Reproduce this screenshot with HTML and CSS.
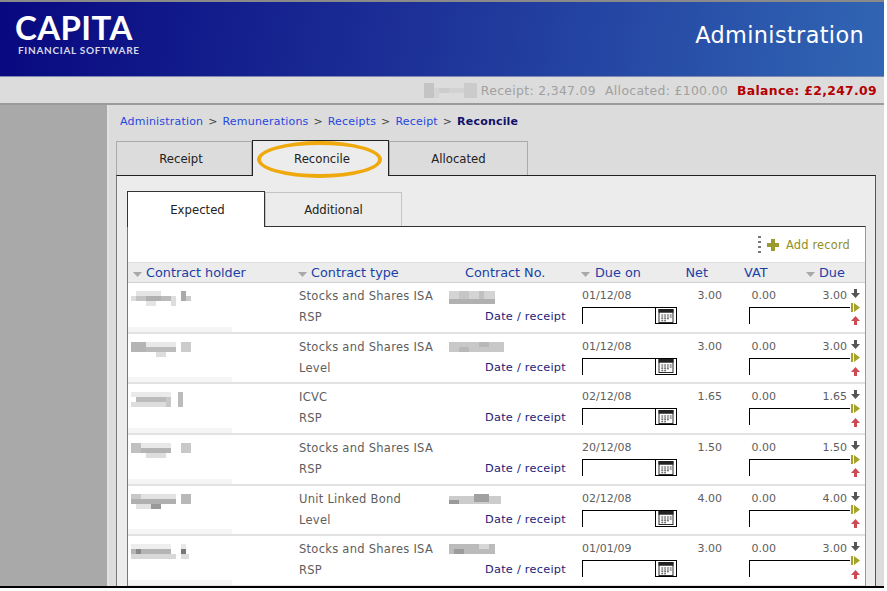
FILE: index.html
```html
<!DOCTYPE html>
<html lang="en">
<head>
<meta charset="utf-8">
<title>Administration</title>
<link rel="stylesheet" href="styles.css">
</head>
<body>
<svg class="defs" width="0" height="0">
  <symbol id="i-sort" viewBox="0 0 9 5"><path d="M0 0h9L4.500 5z" fill="#a8a8a8"/></symbol>
  <symbol id="i-cal" viewBox="0 0 16 15"><rect x="0.500" y="0.500" width="15" height="14" fill="#fff" stroke="#222"/><rect x="0" y="0" width="16" height="4" fill="#222"/><path d="M3 6h2v1H3zm3 0h2v1H6zm3 0h2v1H9zm3 0h2v1h-2zM3 8h2v1H3zm3 0h2v1H6zm3 0h2v1H9zm3 0h2v1h-2zM3 10h2v1H3zm3 0h2v1H6zm3 0h2v1H9zM3 12h2v1H3zm3 0h2v1H6z" fill="#444"/></symbol>
  <symbol id="i-down" viewBox="0 0 9 9"><path d="M3 0h3v4h3L4.500 9 0 4h3z" fill="#555"/></symbol>
  <symbol id="i-right" viewBox="0 0 9 9"><path d="M0 0h2v9H0zM3 0l6 4.500L3 9z" fill="#a5a32a"/></symbol>
  <symbol id="i-up" viewBox="0 0 9 9"><path d="M4.500 0 9 5H6v4H3V5H0z" fill="#cc4a52"/></symbol>
  <symbol id="i-plus" viewBox="0 0 12 12"><path d="M4 0h4v4h4v4H8v4H4V8H0V4h4z" fill="#9a9a30"/></symbol>
</svg>
<div class="frame">
  <header class="banner">
    <div class="logo">
      <div class="logo-main">CAPITA</div>
      <div class="logo-sub">FINANCIAL SOFTWARE</div>
    </div>
    <div class="area-title">Administration</div>
  </header>
  <div class="status">
    <svg class="mosaic" width="53" height="15"><g fill="#c4c4c4"><rect width="10" height="15" x="0"/><rect width="5" height="10" x="10" y="5" fill="#d4d4d4"/><rect width="10" height="5" x="15" y="5" fill="#ccc"/><rect width="15" height="5" x="25" y="5" fill="#d2d2d2"/><rect width="13" height="15" x="40" fill="#cbcbcb"/></g></svg>
    <span>Receipt: 2,347.09</span>
    <span>Allocated: £100.00</span>
    <strong class="balance">Balance: £2,247.09</strong>
  </div>
  <div class="body">
    <aside class="side"></aside>
    <main class="main">
      <nav class="crumbs"><a>Administration</a> &gt; <a>Remunerations</a> &gt; <a>Receipts</a> &gt; <a>Receipt</a> &gt; <b>Reconcile</b></nav>
      <div class="tabs">
        <div class="tab">Receipt</div>
        <div class="tab tab-on">Reconcile</div>
        <div class="tab">Allocated</div>
        <div class="ring"></div>
      </div>
      <section class="panel">
        <div class="subtabs">
          <div class="subtab subtab-on">Expected</div>
          <div class="subtab">Additional</div>
        </div>
        <div class="sheet">
          <div class="toolbar">
            <span class="dots"></span>
            <svg class="plus"><use href="#i-plus"/></svg>
            <span class="add">Add record</span>
          </div>
          <div class="grid head">
            <div class="hc"><svg class="sort"><use href="#i-sort"/></svg>Contract holder</div>
            <div class="hc hc-type"><svg class="sort"><use href="#i-sort"/></svg>Contract type</div>
            <div class="hc hc-no">Contract No.</div>
            <div class="hc hc-due"><svg class="sort"><use href="#i-sort"/></svg>Due on</div>
            <div class="hc hc-net">Net</div>
            <div class="hc hc-vat">VAT</div>
            <div class="hc hc-tot"><svg class="sort"><use href="#i-sort"/></svg>Due</div>
          </div>

          <div class="grid row">
            <svg class="mosaic name" width="60" height="15"><rect x="0" y="5" width="5" height="5" fill="#ddd"/><rect x="5" width="25" height="5" fill="#e4e4e4"/><rect x="5" y="5" width="10" height="5" fill="#c4c4c4"/><rect x="15" y="5" width="15" height="5" fill="#b0b0b0"/><rect x="30" y="5" width="10" height="5" fill="#bbb"/><rect x="15" y="10" width="10" height="5" fill="#e4e4e4"/><rect x="40" y="5" width="5" height="10" fill="#ddd"/><rect x="50" y="0" width="5" height="10" fill="#aaa"/><rect x="55" y="5" width="5" height="5" fill="#ccc"/></svg>
            <div class="type">Stocks and Shares ISA</div>
            <div class="num"><svg class="mosaic" width="46" height="13"><rect width="46" height="9" fill="#d4d4d4"/><rect y="8" width="46" height="5" fill="#b0b0b0"/><rect x="10" y="0" width="10" height="8" fill="#c6c6c6"/><rect x="30" y="0" width="5" height="8" fill="#c0c0c0"/></svg></div>
            <div class="date">01/12/08</div><div class="amt">3.00</div><div class="amt vat">0.00</div><div class="amt tot">3.00</div>
            <div class="acts"><svg><use href="#i-down"/></svg><svg><use href="#i-right"/></svg><svg><use href="#i-up"/></svg></div>
            <div class="sub">RSP</div>
            <a class="link">Date / receipt</a>
            <div class="datebox"><span class="field"></span><span class="calbtn"><svg><use href="#i-cal"/></svg></span></div>
            <div class="duebox"></div>
          </div>

          <div class="grid row">
            <svg class="mosaic name" width="60" height="15"><rect width="15" height="10" fill="#b4b4b4"/><rect x="15" y="5" width="30" height="5" fill="#bbb"/><rect x="15" width="30" height="5" fill="#e8e8e8"/><rect x="25" y="10" width="10" height="5" fill="#ddd"/><rect x="50" width="10" height="10" fill="#ccc"/></svg>
            <div class="type">Stocks and Shares ISA</div>
            <div class="num"><svg class="mosaic" width="55" height="10"><rect width="55" height="10" fill="#c8c8c8"/><rect x="10" y="5" width="10" height="5" fill="#b8b8b8"/><rect x="30" y="0" width="10" height="5" fill="#b8b8b8"/></svg></div>
            <div class="date">01/12/08</div><div class="amt">3.00</div><div class="amt vat">0.00</div><div class="amt tot">3.00</div>
            <div class="acts"><svg><use href="#i-down"/></svg><svg><use href="#i-right"/></svg><svg><use href="#i-up"/></svg></div>
            <div class="sub">Level</div>
            <a class="link">Date / receipt</a>
            <div class="datebox"><span class="field"></span><span class="calbtn"><svg><use href="#i-cal"/></svg></span></div>
            <div class="duebox"></div>
          </div>

          <div class="grid row">
            <svg class="mosaic name" width="58" height="15"><rect y="0" width="40" height="5" fill="#eaeaea"/><rect x="5" y="5" width="35" height="5" fill="#bbb"/><rect x="0" y="10" width="35" height="5" fill="#ddd"/><rect x="35" y="5" width="5" height="10" fill="#c8c8c8"/><rect x="47" y="0" width="5" height="15" fill="#bbb"/></svg>
            <div class="type">ICVC</div>
            <div class="num"></div>
            <div class="date">02/12/08</div><div class="amt">1.65</div><div class="amt vat">0.00</div><div class="amt tot">1.65</div>
            <div class="acts"><svg><use href="#i-down"/></svg><svg><use href="#i-right"/></svg><svg><use href="#i-up"/></svg></div>
            <div class="sub">RSP</div>
            <a class="link">Date / receipt</a>
            <div class="datebox"><span class="field"></span><span class="calbtn"><svg><use href="#i-cal"/></svg></span></div>
            <div class="duebox"></div>
          </div>

          <div class="grid row">
            <svg class="mosaic name" width="60" height="15"><rect width="40" height="5" fill="#e8e8e8"/><rect width="10" height="10" fill="#c0c0c0"/><rect x="10" y="5" width="30" height="5" fill="#b4b4b4"/><rect x="15" y="10" width="20" height="5" fill="#ddd"/><rect x="50" width="10" height="10" fill="#c8c8c8"/></svg>
            <div class="type">Stocks and Shares ISA</div>
            <div class="num"></div>
            <div class="date">20/12/08</div><div class="amt">1.50</div><div class="amt vat">0.00</div><div class="amt tot">1.50</div>
            <div class="acts"><svg><use href="#i-down"/></svg><svg><use href="#i-right"/></svg><svg><use href="#i-up"/></svg></div>
            <div class="sub">RSP</div>
            <a class="link">Date / receipt</a>
            <div class="datebox"><span class="field"></span><span class="calbtn"><svg><use href="#i-cal"/></svg></span></div>
            <div class="duebox"></div>
          </div>

          <div class="grid row">
            <svg class="mosaic name" width="60" height="15"><rect width="45" height="5" fill="#e2e2e2"/><rect width="10" height="10" fill="#c8c8c8"/><rect y="5" width="45" height="5" fill="#b0b0b0"/><rect x="20" y="10" width="10" height="5" fill="#999"/><rect x="5" y="10" width="15" height="5" fill="#e2e2e2"/><rect x="50" y="0" width="10" height="10" fill="#b8b8b8"/></svg>
            <div class="type">Unit Linked Bond</div>
            <div class="num"><svg class="mosaic" width="52" height="12"><rect y="2" width="52" height="8" fill="#ccc"/><rect x="0" y="6" width="10" height="4" fill="#999"/><rect x="25" y="0" width="15" height="8" fill="#a0a0a0"/></svg></div>
            <div class="date">02/12/08</div><div class="amt">4.00</div><div class="amt vat">0.00</div><div class="amt tot">4.00</div>
            <div class="acts"><svg><use href="#i-down"/></svg><svg><use href="#i-right"/></svg><svg><use href="#i-up"/></svg></div>
            <div class="sub">Level</div>
            <a class="link">Date / receipt</a>
            <div class="datebox"><span class="field"></span><span class="calbtn"><svg><use href="#i-cal"/></svg></span></div>
            <div class="duebox"></div>
          </div>

          <div class="grid row">
            <svg class="mosaic name" width="58" height="15"><rect y="0" width="40" height="5" fill="#eee"/><rect x="0" y="5" width="40" height="5" fill="#b4b4b4"/><rect x="5" y="5" width="5" height="5" fill="#888"/><rect y="10" width="45" height="5" fill="#d8d8d8"/><rect x="50" y="5" width="5" height="5" fill="#777"/><rect x="50" y="0" width="5" height="5" fill="#e8e8e8"/><rect x="50" y="10" width="8" height="5" fill="#ddd"/></svg>
            <div class="type">Stocks and Shares ISA</div>
            <div class="num"><svg class="mosaic" width="46" height="10"><rect width="46" height="10" fill="#bbb"/><rect x="5" y="5" width="10" height="5" fill="#9c9c9c"/><rect x="30" y="0" width="10" height="5" fill="#d8d8d8"/></svg></div>
            <div class="date">01/01/09</div><div class="amt">3.00</div><div class="amt vat">0.00</div><div class="amt tot">3.00</div>
            <div class="acts"><svg><use href="#i-down"/></svg><svg><use href="#i-right"/></svg><svg><use href="#i-up"/></svg></div>
            <div class="sub">RSP</div>
            <a class="link">Date / receipt</a>
            <div class="datebox"><span class="field"></span><span class="calbtn"><svg><use href="#i-cal"/></svg></span></div>
            <div class="duebox"></div>
          </div>
        </div>
      </section>
    </main>
  </div>
</div>
</body>
</html>
```

FILE: styles.css
```css
* { box-sizing: border-box; }
html, body { margin: 0; padding: 0; background: #fff; }
body { height: 591px; overflow: hidden; font-family: "DejaVu Sans", Verdana, sans-serif; font-size: 11px; color: #5e5e5e; }
.defs { position: absolute; }
svg { display: block; }

.frame { width: 884px; height: 588px; overflow: hidden; display: flex; flex-direction: column; border-top: 2px solid #8a8a8a; border-bottom: 2px solid #000; background: #dcdcdc; }

.banner { height: 75px; flex: none; display: flex; justify-content: space-between; background: linear-gradient(100deg, #08087f 0%, #1c2f97 45%, #3166b4 100%); border-bottom: 1px solid #7c87b4; }
.logo { padding: 9px 0 0 15px; color: #fff; font-family: "Lato", "Liberation Sans", sans-serif; }
.logo-main { font-size: 33px; line-height: 33px; font-weight: 700; letter-spacing: 0.4px; }
.logo-sub { margin: 0 0 0 3px; font-size: 10px; line-height: 12px; font-weight: 700; color: #d6daea; letter-spacing: 0.7px; }
.area-title { padding: 20px 20px 0 0; font-size: 22.400px; line-height: 26px; color: #fff; letter-spacing: 0.35px; }

.status { height: 28px; flex: none; display: flex; justify-content: flex-end; align-items: center; gap: 9px; padding-right: 7px; color: #a0a0a0; font-size: 12.400px; letter-spacing: 0.33px; border-bottom: 2px solid #9a9a9a; }
.status .mosaic { margin-right: -5px; }
.balance { color: #b30000; }

.body { flex: 1; min-height: 0; display: flex; }
.side { flex: none; background: #a9a9a9; border-right: 2px solid #e2e2e2; width: 109px; }
.main { flex: 1; min-width: 0; padding: 0 8px 0 7px; display: flex; flex-direction: column; }

.crumbs { height: 35px; flex: none; padding: 9px 0 0 4px; line-height: 15px; font-size: 11px; color: #444; letter-spacing: 0.2px; word-spacing: 1.200px; }
.crumbs a { color: #1f47e0; }
.crumbs b { color: #10106a; }

.tabs { position: relative; height: 35px; flex: none; display: flex; align-items: flex-end; font-size: 11.700px; }
.tab { width: 137px; height: 34px; display: flex; align-items: center; justify-content: center; color: #222; background: #dcdcdc; border: 1px solid #aaa; border-bottom: 0; }
.tab:first-child { width: 136px; padding-right: 6px; }
.tab:nth-child(3) { width: 139px; }
.tab-on { height: 36px; margin-bottom: -1px; position: relative; z-index: 1; background: #ececec; border-color: #222; padding-left: 3px; }
.ring { position: absolute; z-index: 2; left: 141px; top: 1px; width: 125px; height: 37px; border: 4px solid #f0a90c; border-radius: 50%; }

.panel { flex: 1; min-height: 0; background: #ececec; border: 1px solid #222; border-left-color: #777; border-right-color: #555; border-bottom: 0; padding: 15px 9px 0 10px; display: flex; flex-direction: column; }

.subtabs { height: 35px; flex: none; display: flex; align-items: flex-end; font-size: 11.700px; }
.subtab { width: 137px; height: 34px; padding-top: 1px; display: flex; align-items: center; justify-content: center; color: #222; border: 1px solid #c4c4c4; border-bottom: 0; }
.subtab-on { width: 138px; height: 36px; margin-bottom: -1px; padding-left: 3px; position: relative; z-index: 1; background: #fff; border-color: #333; }

.sheet { flex: 1; min-height: 0; overflow: hidden; background: #fff; border-top: 1px solid #333; border-left: 1px solid #777; border-right: 1px solid #999; }
.toolbar { height: 35px; display: flex; align-items: center; justify-content: flex-end; padding: 0 15px 0 0; }
.dots { width: 3px; height: 18px; margin-right: 6px; background: repeating-linear-gradient(to bottom, #777 0 2px, transparent 2px 5px); }
.plus { width: 12px; height: 12px; margin-right: 7px; }
.add { color: #8f8f1e; font-size: 11.400px; letter-spacing: 0.2px; }

.grid { display: grid; grid-template-columns: 171px 150px 133px 104px 36px 27px 27px 74px 16px; }
.head { height: 21px; align-items: center; background: #ececec; border-top: 1px solid #e0e0e0; border-bottom: 1px solid #d2d2d2; color: #1a3fa6; font-size: 12.800px; }
.hc { display: flex; align-items: center; white-space: nowrap; }
.sort { width: 9px; height: 5px; margin: 3px 4px 0 5px; flex: none; }
.hc-type .sort { margin-left: -1px; margin-right: 4px; }
.hc-no { padding-left: 16px; }
.hc-due .sort { margin-left: -1px; margin-right: 5px; }
.hc-net { grid-column: 5; justify-content: flex-end; padding-right: 14px; margin-left: -30px; }
.hc-vat { grid-column: 6 / 8; padding-left: 22px; }
.hc-tot { grid-column: 8; padding-left: 25px; }

.row { position: relative; height: 50.700px; grid-template-rows: 20px 1fr; border-bottom: 2px solid #e2e2e2; padding-top: 4px; }
.row::after { content: ""; position: absolute; left: 0; bottom: 0; width: 104px; height: 5px; background: #f5f5f5; }
.type, .sub { font-size: 11.500px; line-height: 20px; letter-spacing: 0.27px; }
.type { margin-top: -1px; }
.sub { grid-column: 2; }
.name { grid-column: 1; margin: 4px 0 0 3px; }
.num { grid-column: 3; }
.date { grid-column: 4; line-height: 17px; }
.amt { line-height: 17px; text-align: right; }
.amt { grid-column: 5; }
.vat { grid-column: 6 / 8; }
.tot { grid-column: 8; padding-right: 3px; }
.acts { grid-column: 9; grid-row: 1 / 3; display: flex; flex-direction: column; gap: 4.600px; padding-left: 1px; margin-top: 2px; }
.acts svg { width: 9px; height: 9px; }
.link { grid-column: 3; grid-row: 2; text-align: right; padding: 0 16px 0 0; font-size: 11.300px; line-height: 20px; color: #1b1b78; letter-spacing: 0.27px; }
.datebox { grid-column: 4 / 6; grid-row: 2; display: flex; height: 18px; }
.field { width: 73px; height: 17px; background: #fff; border-top: 1px solid #000; border-left: 1px solid #000; }
.calbtn { width: 22px; height: 17px; border: 1px solid #000; display: flex; align-items: center; justify-content: center; }
.calbtn svg { width: 16px; height: 14px; }
.duebox { grid-column: 7 / 9; grid-row: 2; height: 17px; border-top: 1px solid #000; border-left: 1px solid #000; }
.num .mosaic { margin-top: 4px; }
```
